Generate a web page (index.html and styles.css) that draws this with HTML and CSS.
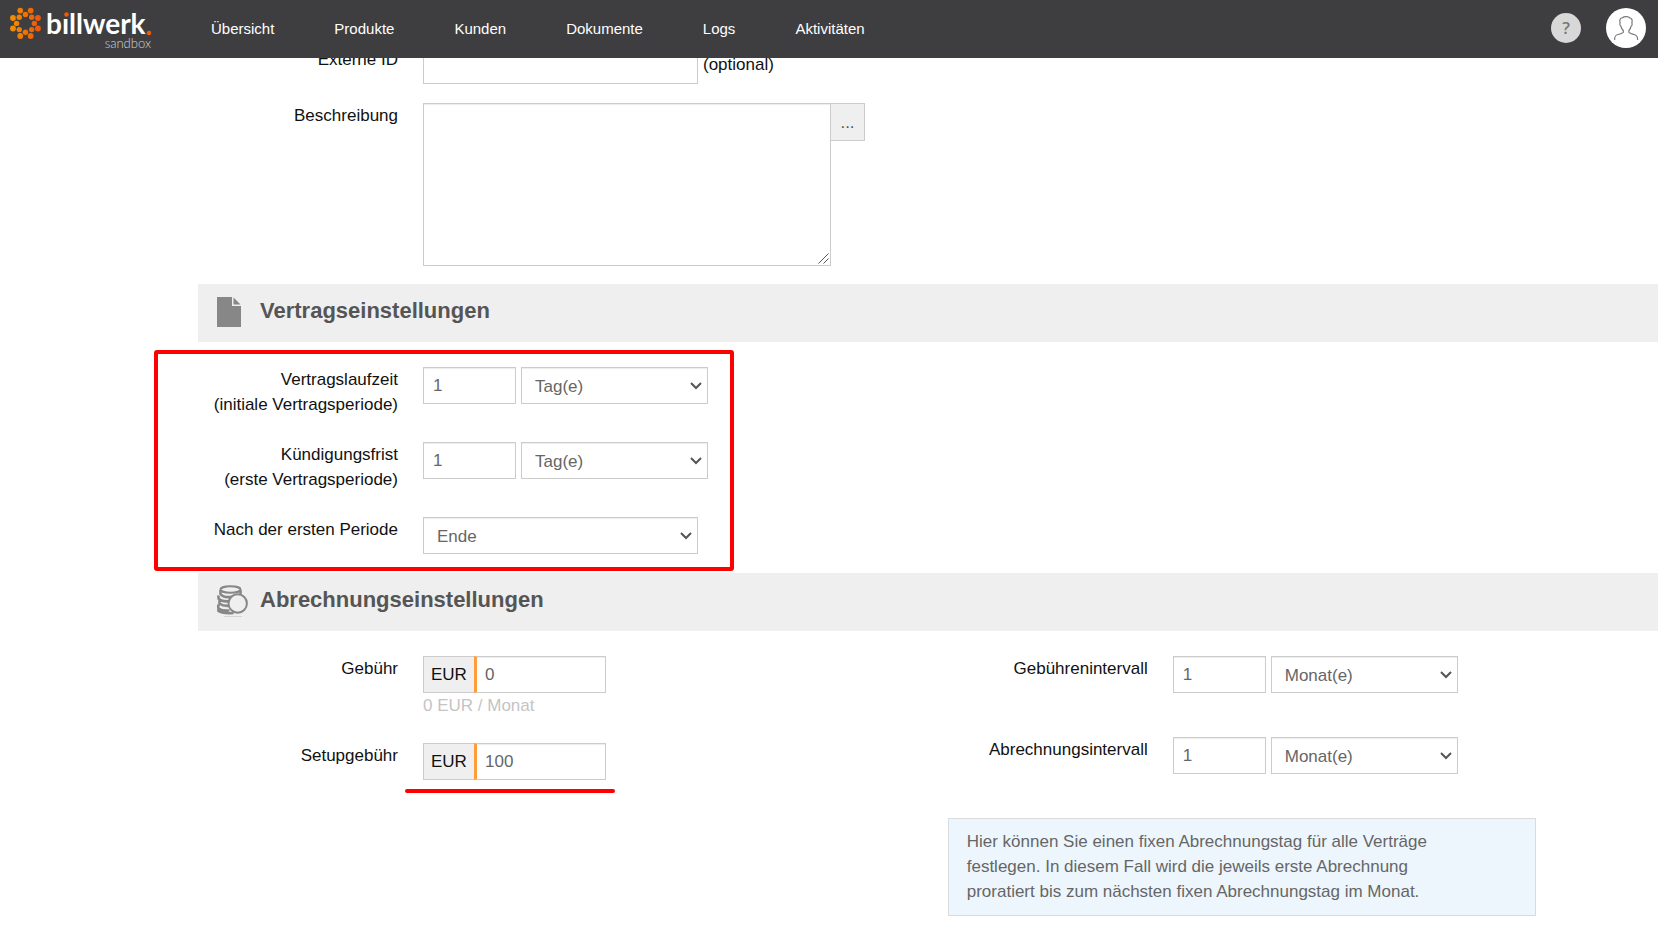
FILE: index.html
```html
<!DOCTYPE html>
<html lang="de">
<head>
<meta charset="utf-8">
<title>billwerk sandbox</title>
<link rel="stylesheet" href="styles.css">
</head>
<body>
<header class="topbar">
  <a class="logo" href="#" aria-label="billwerk sandbox">
    <svg width="160" height="58" viewBox="0 0 160 58">
      <defs>
        <linearGradient id="flame" gradientUnits="userSpaceOnUse" x1="10" y1="0" x2="41" y2="0">
          <stop offset="0" stop-color="#f29100"/>
          <stop offset="1" stop-color="#e9540d"/>
        </linearGradient>
      </defs>
      <g fill="url(#flame)">
        <circle cx="20.3" cy="10.6" r="2.9"/><circle cx="30.7" cy="10.6" r="2.9"/>
        <circle cx="38" cy="18" r="2.9"/><circle cx="38" cy="28.5" r="2.9"/>
        <circle cx="30.7" cy="36" r="2.9"/><circle cx="20.3" cy="36" r="2.9"/>
        <circle cx="13" cy="28.5" r="2.9"/><circle cx="13" cy="18" r="2.9"/>
        <circle cx="25.5" cy="14.5" r="2.7"/><circle cx="31.7" cy="17.2" r="2.7"/>
        <circle cx="34.4" cy="23.4" r="2.7"/><circle cx="31.7" cy="29.6" r="2.7"/>
        <circle cx="25.5" cy="32.3" r="2.7"/><circle cx="19.3" cy="29.6" r="2.7"/>
        <circle cx="16.6" cy="23.4" r="2.7"/><circle cx="19.3" cy="17.2" r="2.7"/>
      </g>
      <text class="logo-name" x="46" y="34">bıllwerk</text>
      <circle cx="66.500" cy="14.5" r="2.3" fill="#ea5b0c"/>
      <circle cx="149" cy="33" r="2.3" fill="#ea5b0c"/>
      <text class="logo-sub" x="151" y="48" text-anchor="end">sandbox</text>
    </svg>
  </a>
  <nav class="menu">
    <a href="#">Übersicht</a>
    <a href="#">Produkte</a>
    <a href="#">Kunden</a>
    <a href="#">Dokumente</a>
    <a href="#">Logs</a>
    <a href="#">Aktivitäten</a>
  </nav>
  <div class="tools">
    <button class="help" type="button">?</button>
    <button class="avatar" type="button" aria-label="Profil">
      <svg width="40" height="40" viewBox="0 0 40 40" fill="none" stroke="#77787b" stroke-width="1.2" stroke-linejoin="round" stroke-linecap="round">
        <path d="M8.700 31.500 C8.500 28 9.500 27.200 12 26.500 C15 25.700 17 25.300 17.300 24.200 L17.300 22.500 C16 21.300 15.200 19.700 15 18.300 C14 18 13.600 16 14.100 15 C13.200 11.500 14.500 9.500 16.500 9.800 C18.500 8 22.500 8.500 24 10 C26.200 10.500 26.500 12.500 25.900 15 C26.400 16 26 18 25 18.300 C24.800 19.700 24 21.300 22.900 22.500 L22.900 24.200 C23.200 25.300 25 25.700 28 26.500 C30.500 27.200 31.700 28 31.600 31.500"/>
      </svg>
    </button>
  </div>
</header>

<main class="page">
  <form class="form">
    <div class="row row-basic">
      <label class="label" for="externalId">Externe ID</label>
      <div class="field">
        <input class="control wide" id="externalId" type="text">
        <span class="note">(optional)</span>
      </div>
    </div>
    <div class="row row-basic">
      <label class="label" for="description">Beschreibung</label>
      <div class="field field-joined">
        <textarea class="control area" id="description"></textarea>
        <button class="more" type="button">...</button>
      </div>
    </div>

    <h2 class="section-title">
      <svg class="section-icon" width="32" height="32" viewBox="0 0 32 32">
        <path fill="#878787" d="M0 1h15v9h9v21H0z"/>
        <path fill="#878787" d="M16.500 1.500l7 7h-7z"/>
      </svg>
      Vertragseinstellungen
    </h2>
    <div class="contract">
      <div class="row">
        <label class="label" for="term">Vertragslaufzeit<br>(initiale Vertragsperiode)</label>
        <div class="field">
          <input class="control number" id="term" type="text" value="1">
          <select class="control unit" aria-label="Einheit der Vertragslaufzeit"><option>Tag(e)</option></select>
        </div>
      </div>
      <div class="row">
        <label class="label" for="notice">Kündigungsfrist<br>(erste Vertragsperiode)</label>
        <div class="field">
          <input class="control number" id="notice" type="text" value="1">
          <select class="control unit" aria-label="Einheit der Kündigungsfrist"><option>Tag(e)</option></select>
        </div>
      </div>
      <div class="row">
        <label class="label" for="after">Nach der ersten Periode</label>
        <div class="field">
          <select class="control wide" id="after"><option>Ende</option></select>
        </div>
      </div>
      <div class="marker-box"></div>
    </div>

    <h2 class="section-title">
      <svg class="section-icon" width="32" height="32" viewBox="0 0 32 32" fill="none" stroke="#878787" stroke-width="2">
        <ellipse cx="13.500" cy="4.500" rx="10" ry="3.200"/>
        <path d="M3.500 5v4c2 2.800 7 3.600 12 2.800M23.500 5v4M1.800 10.500c-.6 1.500-.3 2.800 0 3.500 2.500 2.200 6 2.700 10 2.300M3 15c-.8 1.500-.6 2.800-.3 3.700 2.300 1.700 5 2.300 8.500 2.200M1.500 19.500c-.4 1.700-.3 3 0 4 2.800 2 6.500 2.300 11 2M1.500 23v3c3 2.300 8 2.500 15 2" stroke-width="2.600"/>
        <circle cx="20.700" cy="18.500" r="9.200" fill="#efefef"/>
        <path d="M7 31.500h18" stroke="#d4d4d4" stroke-width="1"/>
      </svg>
      Abrechnungseinstellungen
    </h2>
    <div class="billing">
      <div class="column">
        <div class="row row-fee">
          <label class="label" for="fee">Gebühr</label>
          <div>
            <div class="money">
              <span class="currency">EUR</span>
              <input class="control amount" id="fee" type="text" value="0">
            </div>
            <div class="hint">0 EUR / Monat</div>
          </div>
        </div>
        <div class="row row-fee">
          <label class="label" for="setup">Setupgebühr</label>
          <div class="money">
            <span class="currency">EUR</span>
            <input class="control amount" id="setup" type="text" value="100">
            <span class="marker-line"></span>
          </div>
        </div>
      </div>
      <div class="column">
        <div class="row row-interval">
          <label class="label" for="feeInterval">Gebührenintervall</label>
          <div class="field">
            <input class="control number" id="feeInterval" type="text" value="1">
            <select class="control unit" aria-label="Einheit des Gebührenintervalls"><option>Monat(e)</option></select>
          </div>
        </div>
        <div class="row row-interval">
          <label class="label" for="billInterval">Abrechnungsintervall</label>
          <div class="field">
            <input class="control number" id="billInterval" type="text" value="1">
            <select class="control unit" aria-label="Einheit des Abrechnungsintervalls"><option>Monat(e)</option></select>
          </div>
        </div>
        <p class="info">Hier können Sie einen fixen Abrechnungstag für alle Verträge festlegen. In diesem Fall wird die jeweils erste Abrechnung proratiert bis zum nächsten fixen Abrechnungstag im Monat.</p>
      </div>
    </div>
  </form>
</main>
</body>
</html>
```

FILE: styles.css
```css
* { box-sizing: border-box; }

body {
  margin: 0;
  background: #fff;
  color: #111;
  font: 17px/25px "Liberation Sans", Arial, sans-serif;
}

input, select, textarea, button { font: inherit; margin: 0; }

.topbar {
  position: fixed;
  top: 0;
  left: 0;
  right: 0;
  z-index: 10;
  display: flex;
  align-items: center;
  height: 58px;
  padding: 0 12px 2px 0;
  background: #3e3e40;
}

.logo { display: block; height: 56px; }
.logo svg { display: block; }
.logo-name { font: 700 28px Lato, sans-serif; fill: #fff; }
.logo-sub { font: 300 13px Lato, sans-serif; fill: #d4d4d4; }

.menu { display: flex; gap: 60px; margin-left: 51px; }
.menu a { color: #fff; font-size: 15px; text-decoration: none; }

.tools { display: flex; align-items: center; gap: 25px; margin-left: auto; }
.help {
  width: 30px;
  height: 30px;
  padding: 0;
  border: 0;
  border-radius: 50%;
  background: #d8d8d8;
  color: #77787b;
  font: 600 17px/30px "Open Sans", sans-serif;
}
.avatar {
  width: 40px;
  height: 40px;
  padding: 0;
  border: 0;
  border-radius: 50%;
  background: #fff;
}
.avatar svg { display: block; }

.page { padding: 47px 0 11px 198px; }

.row {
  display: grid;
  grid-template-columns: 200px minmax(0, 1fr);
  column-gap: 25px;
  align-items: start;
  margin-bottom: 25px;
}
.row-basic { margin-bottom: 19px; }
.row-basic + .row-basic { margin-bottom: 18px; }
.row-interval { margin-bottom: 44px; }
.label { text-align: right; }

.field { display: flex; gap: 5px; }
.field-joined { gap: 0; align-items: flex-start; }
.note { padding-top: 5px; }

.control {
  height: 37px;
  padding: 0 9px;
  border: 1px solid #ccc;
  border-radius: 0;
  outline: 0;
  background: #fff;
  box-shadow: inset 0 1px 1px rgba(0, 0, 0, 0.075);
  color: #666;
}
select.control {
  appearance: none;
  padding: 1px 30px 0 13px;
  background: #fff url("data:image/svg+xml,%3Csvg xmlns='http://www.w3.org/2000/svg' width='12' height='8'%3E%3Cpath d='M1 1l5 5 5-5' fill='none' stroke='%23555' stroke-width='2'/%3E%3C/svg%3E") no-repeat right 5px center;
}
.wide { width: 275px; }
.number { width: 93px; }
.unit { width: 187px; }
textarea.area {
  display: block;
  width: 408px;
  height: 163px;
  background: #fff url("data:image/svg+xml,%3Csvg xmlns='http://www.w3.org/2000/svg' width='11' height='11'%3E%3Cpath d='M.5 10.500l10-10M5.500 10.500l5-5' fill='none' stroke='%23555'/%3E%3C/svg%3E") no-repeat right 1px bottom 1px;
}
.area::-webkit-resizer { background: transparent; }
.more {
  width: 35px;
  height: 38px;
  margin-left: -1px;
  padding: 0;
  border: 1px solid #ccc;
  background: #efefef;
  color: #555;
}

.section-title {
  display: flex;
  align-items: center;
  gap: 11px;
  height: 58px;
  margin: 0 0 25px;
  padding: 0 19px 5px;
  background: #efefef;
  color: #555;
  font-size: 22px;
  line-height: 30px;
}
.section-icon { margin-top: 2px; }

.contract { position: relative; padding-bottom: 19px; }
.contract .row:nth-of-type(3) { margin-bottom: 0; }
.marker-box {
  position: absolute;
  top: -17px;
  bottom: 2px;
  left: -44px;
  width: 580px;
  border: 4px solid #f00;
  border-radius: 3px;
  pointer-events: none;
}

.billing { display: grid; grid-template-columns: 19fr 18fr; }

.money { position: relative; display: flex; width: 183px; }
.currency {
  width: 51px;
  padding: 5px 0 0 7px;
  border: 1px solid #ccc;
  border-right: 0;
  background: #efefef;
}
.amount { flex: 1; min-width: 0; padding-left: 8px; border-left: 3px solid #ff9d3b; }
.hint { color: #c4c4c4; }
.marker-line {
  position: absolute;
  top: 46px;
  left: -18px;
  width: 210px;
  height: 4px;
  border-radius: 2px;
  background: #f00;
}

.info {
  margin: 0 122px 0 0;
  padding: 10px 90px 11px 18px;
  border: 1px solid #d8dcde;
  background: #edf6fd;
  color: #666;
}
```
